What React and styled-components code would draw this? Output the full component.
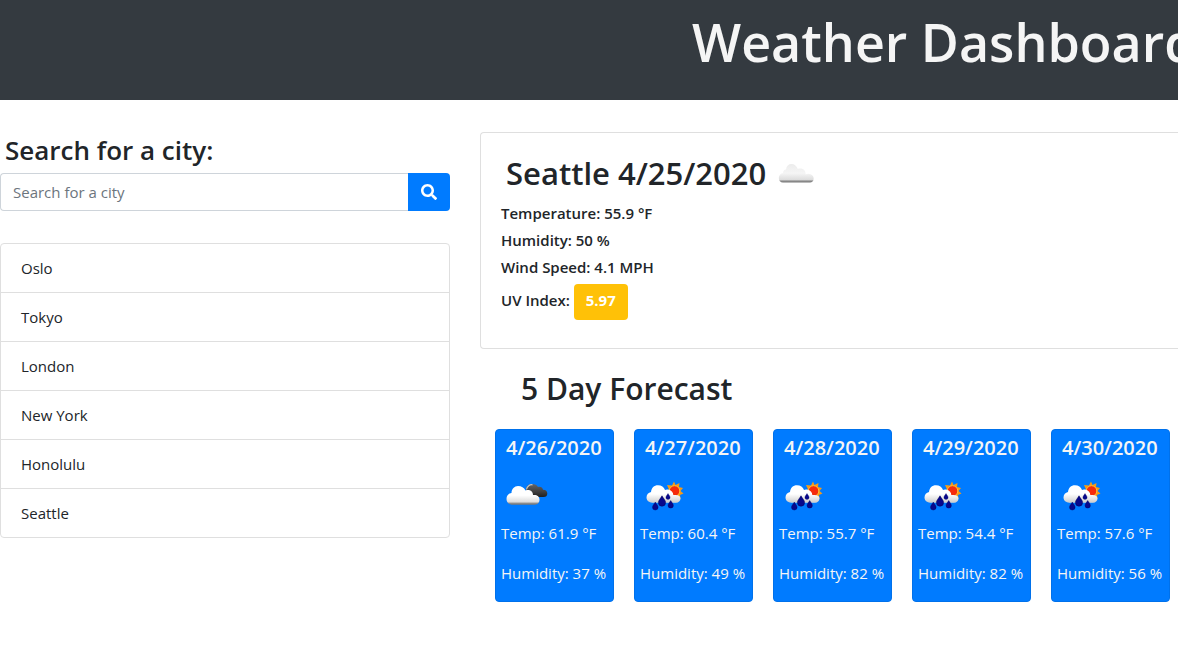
import React, { useState } from "react";
import styled, { createGlobalStyle } from "styled-components";
import { FaSearch } from "react-icons/fa";

const GlobalStyle = createGlobalStyle`
  *, *::before, *::after { box-sizing: border-box; }
  body {
    margin: 0;
    background: #fff;
    color: #212529;
    font: 400 15px/24px "Segoe UI", "Open Sans", "Noto Sans", sans-serif;
    overflow-x: hidden;
  }
  h1, h2, h3, p { margin: 0; }
`;

const Header = styled.header`
  height: 100px;
  padding: 8px 0 0 692px;
  overflow: hidden;
  background: #343a40;
`;

const SiteTitle = styled.h1`
  color: #f5f5f5;
  font-size: 52px;
  font-weight: 600;
  line-height: 68px;
  white-space: nowrap;
`;

const Page = styled.main`
  display: grid;
  grid-template-columns: 450px minmax(0, 1fr);
  gap: 30px;
  padding-top: 32px;
`;

const Heading = styled.h2`
  font-size: ${(p) => p.$size};
  line-height: ${(p) => p.$line};
  font-weight: 600;
  white-space: nowrap;
`;

const SearchLabel = styled.label`
  display: block;
  padding-left: 5px;
`;

const SearchForm = styled.form`
  display: flex;
  height: 38px;
  margin: 5px 0 32px;
`;

const SearchInput = styled.input`
  flex: 1;
  min-width: 0;
  padding: 6px 12px;
  border: 1px solid #ced4da;
  border-right: 0;
  border-radius: 4px 0 0 4px;
  background: #fff;
  color: #495057;
  font: inherit;

  &::placeholder {
    color: #6c757d;
    opacity: 1;
  }
`;

const SearchButton = styled.button`
  display: flex;
  align-items: center;
  justify-content: center;
  width: 42px;
  border: 0;
  border-radius: 0 4px 4px 0;
  background: #007bff;
  color: #fff;
  font-size: 16px;
  cursor: pointer;
`;

const CityList = styled.ul`
  margin: 0;
  padding: 0;
  border: 1px solid #dfdfdf;
  border-radius: 4px;
  list-style: none;
`;

const CityItem = styled.li`
  padding: 12px 20px;

  & + & {
    border-top: 1px solid #dfdfdf;
  }
`;

const CurrentCard = styled.section`
  height: 217px;
  padding: 20px 20px 0;
  border: 1px solid #dfdfdf;
  border-right: 0;
  border-radius: 4px 0 0 4px;
`;

const CurrentTitle = styled.div`
  display: flex;
  align-items: center;
  gap: 8px;
  height: 40px;
  margin-bottom: 8px;
  padding-left: 5px;
`;

const Reading = styled.p`
  margin-bottom: 3px;
  font-weight: 600;
`;

const UvReading = styled(Reading)`
  padding-top: 2px;
`;

const UvBadge = styled.span`
  display: inline-block;
  padding: 4px 12px 8px;
  border-radius: 4px;
  background: #ffc107;
  color: #fff;
  font-weight: 700;
`;

const Forecast = styled.section`
  padding: 20px 8px 0 15px;
`;

const ForecastTitle = styled.div`
  margin-bottom: 20px;
  padding-left: 26px;
`;

const DayGrid = styled.div`
  display: grid;
  grid-template-columns: repeat(5, minmax(0, 1fr));
  gap: 20px;
`;

const DayCard = styled.article`
  height: 173px;
  padding: 6px 5px 0;
  border: 1px solid #0071eb;
  border-radius: 4px;
  background: #007bff;
  color: #f5f5f5;
  white-space: nowrap;
`;

const DayDate = styled.h3`
  padding-left: 5px;
  font-size: 20px;
  font-weight: 600;
  line-height: 24px;
`;

const DayIcon = styled.div`
  height: 50px;
  margin: 11px 0 0;
`;

const DayText = styled.p`
  margin-bottom: 16px;
`;

const IconSvg = styled.svg`
  display: block;
  flex: none;
`;

const CLOUD =
  "M12 33.700C8 33.700 5.500 31.500 5.500 28C5.500 24.500 7.500 22.500 10.500 22C10.500 18 13.500 15 17 15C20.500 15 23 16.500 24.500 19.500C29 18 32 20.500 32 24C36 23.500 38.500 25.500 38.500 28.500C38.500 31.700 36.500 33.700 34 33.700Z";
const LONE_CLOUD =
  "M9 34.500C6.500 34.500 4.800 32.500 4.800 30C4.800 27.300 6.500 25.500 9 25C8.800 23 10.200 21.600 12 21.400C12.500 18 14.500 16 17.500 16C20.500 16 22.800 18 23.800 21C26 20 29 20.500 30.500 22.500C31.500 23.800 31.800 25 31.500 26.500C33 25.600 35 25.600 36.500 26.300C38.700 27.200 39.700 28.800 39.700 30.700C39.700 33 38 34.500 36 34.500Z";
const RAIN_CLOUD =
  "M12.500 31.700C9 31.700 6.500 29.500 6.500 26.500C6.500 23.500 8.500 21.500 11 21C11.500 17 14 14.300 18 14.300C21.500 14.300 24 16 25 19C26 18.400 27.500 18.300 29 18.800C31.500 19.600 33.300 21.500 33.300 24C37.500 23.500 40.500 24.500 40.500 27.500C40.500 30 38.500 31.700 36 31.700Z";
const BACK_CLOUD =
  "M25 18C25.500 14.500 28 13 31 13C34 13 36 14 37 16C40 15.300 41.500 16.800 42 18.800C45 18.800 46.300 20.300 46.300 22.400C46.300 24.700 45 26 42.500 26H29C26 24 25 21 25 18Z";
const SUN =
  "M34 10.500L35.500 14L39.500 12L39 16L43 17L40.500 20L43.500 22.500L40 24L40.500 28L36.500 26.500L34 29.500L32 26L27.500 27L29 23L26 20.500L29 18.500L27 14L32 14.500Z";
const DROPS = [
  [15.300, 31, 1],
  [22, 24.800, 1.300],
  [28, 22.500, 0.750],
  [30.700, 29.500, 0.950],
];

function WeatherIcon({ kind }) {
  const id = React.useId();
  const light = `${id}-light`;
  const dark = `${id}-dark`;
  const front = { cloud: LONE_CLOUD, broken: CLOUD, rain: RAIN_CLOUD }[kind];
  return (
    <IconSvg width="50" height="50" viewBox="0 0 50 50" aria-hidden="true">
      <defs>
        <linearGradient id={light} x1="0" y1="0" x2="0" y2="1">
          <stop offset="0" stopColor={kind === "cloud" ? "#ececec" : "#ffffff"} />
          <stop offset="0.5" stopColor={kind === "cloud" ? "#f5f5f5" : "#ffffff"} />
          <stop offset="0.86" stopColor="#dcdcdc" />
          <stop offset="0.91" stopColor={kind === "rain" ? "#d0d0d0" : "#929292"} />
          <stop offset="1" stopColor={kind === "rain" ? "#d8d8d8" : "#777777"} />
        </linearGradient>
        <linearGradient id={dark} x1="0" y1="0" x2="0" y2="1">
          <stop offset="0" stopColor="#656565" />
          <stop offset="0.6" stopColor="#3e3e3e" />
          <stop offset="1" stopColor="#202020" />
        </linearGradient>
      </defs>
      {kind === "broken" && (
        <>
          <path d={BACK_CLOUD} fill={`url(#${dark})`} />
          <path d="M25.500 18.500C26 15 29 13.300 31.500 13.800" fill="none" stroke="#c4c4c4" strokeWidth="1.200" />
        </>
      )}
      {kind === "rain" && (
        <>
          <path d={SUN} fill="#f79a16" />
          <circle cx="34.500" cy="20" r="5.300" fill="#f52b0b" stroke="#ffbd35" />
        </>
      )}
      <path d={front} fill={`url(#${light})`} />
      {kind === "rain" &&
        DROPS.map(([x, y, scale]) => (
          <path
            key={x}
            d="M0 0C1 2 2.800 3.500 2.800 5.200A2.800 2.800 0 0 1-2.800 5.200C-2.800 3.500-1 2 0 0Z"
            transform={`translate(${x} ${y}) scale(${scale})`}
            fill="#08088c"
            stroke="#03035f"
            strokeWidth="0.400"
          />
        ))}
    </IconSvg>
  );
}

const cities = ["Oslo", "Tokyo", "London", "New York", "Honolulu", "Seattle"];

const days = [
  { date: "4/26/2020", kind: "broken", temp: "61.9", humidity: 37 },
  { date: "4/27/2020", kind: "rain", temp: "60.4", humidity: 49 },
  { date: "4/28/2020", kind: "rain", temp: "55.7", humidity: 82 },
  { date: "4/29/2020", kind: "rain", temp: "54.4", humidity: 82 },
  { date: "4/30/2020", kind: "rain", temp: "57.6", humidity: 56 },
];

export default function App() {
  const [query, setQuery] = useState("");
  return (
    <>
      <GlobalStyle />
      <Header>
        <SiteTitle>Weather Dashboard</SiteTitle>
      </Header>
      <Page>
        <aside>
          <Heading $size="26px" $line="36px">
            <SearchLabel htmlFor="city">Search for a city:</SearchLabel>
          </Heading>
          <SearchForm onSubmit={(e) => e.preventDefault()}>
            <SearchInput
              id="city"
              type="text"
              placeholder="Search for a city"
              value={query}
              onChange={(e) => setQuery(e.target.value)}
            />
            <SearchButton type="submit" aria-label="Search">
              <FaSearch />
            </SearchButton>
          </SearchForm>
          <CityList>
            {cities.map((city) => (
              <CityItem key={city}>{city}</CityItem>
            ))}
          </CityList>
        </aside>
        <div>
          <CurrentCard>
            <CurrentTitle>
              <Heading $size="31px" $line="40px">Seattle 4/25/2020</Heading>
              <WeatherIcon kind="cloud" />
            </CurrentTitle>
            <Reading>Temperature: 55.9 °F</Reading>
            <Reading>Humidity: 50 %</Reading>
            <Reading>Wind Speed: 4.1 MPH</Reading>
            <UvReading>
              UV Index: <UvBadge>5.97</UvBadge>
            </UvReading>
          </CurrentCard>
          <Forecast>
            <ForecastTitle>
              <Heading $size="30px" $line="40px">5 Day Forecast</Heading>
            </ForecastTitle>
            <DayGrid>
              {days.map((day) => (
                <DayCard key={day.date}>
                  <DayDate>{day.date}</DayDate>
                  <DayIcon>
                    <WeatherIcon kind={day.kind} />
                  </DayIcon>
                  <DayText>Temp: {day.temp} °F</DayText>
                  <DayText>Humidity: {day.humidity} %</DayText>
                </DayCard>
              ))}
            </DayGrid>
          </Forecast>
        </div>
      </Page>
    </>
  );
}
